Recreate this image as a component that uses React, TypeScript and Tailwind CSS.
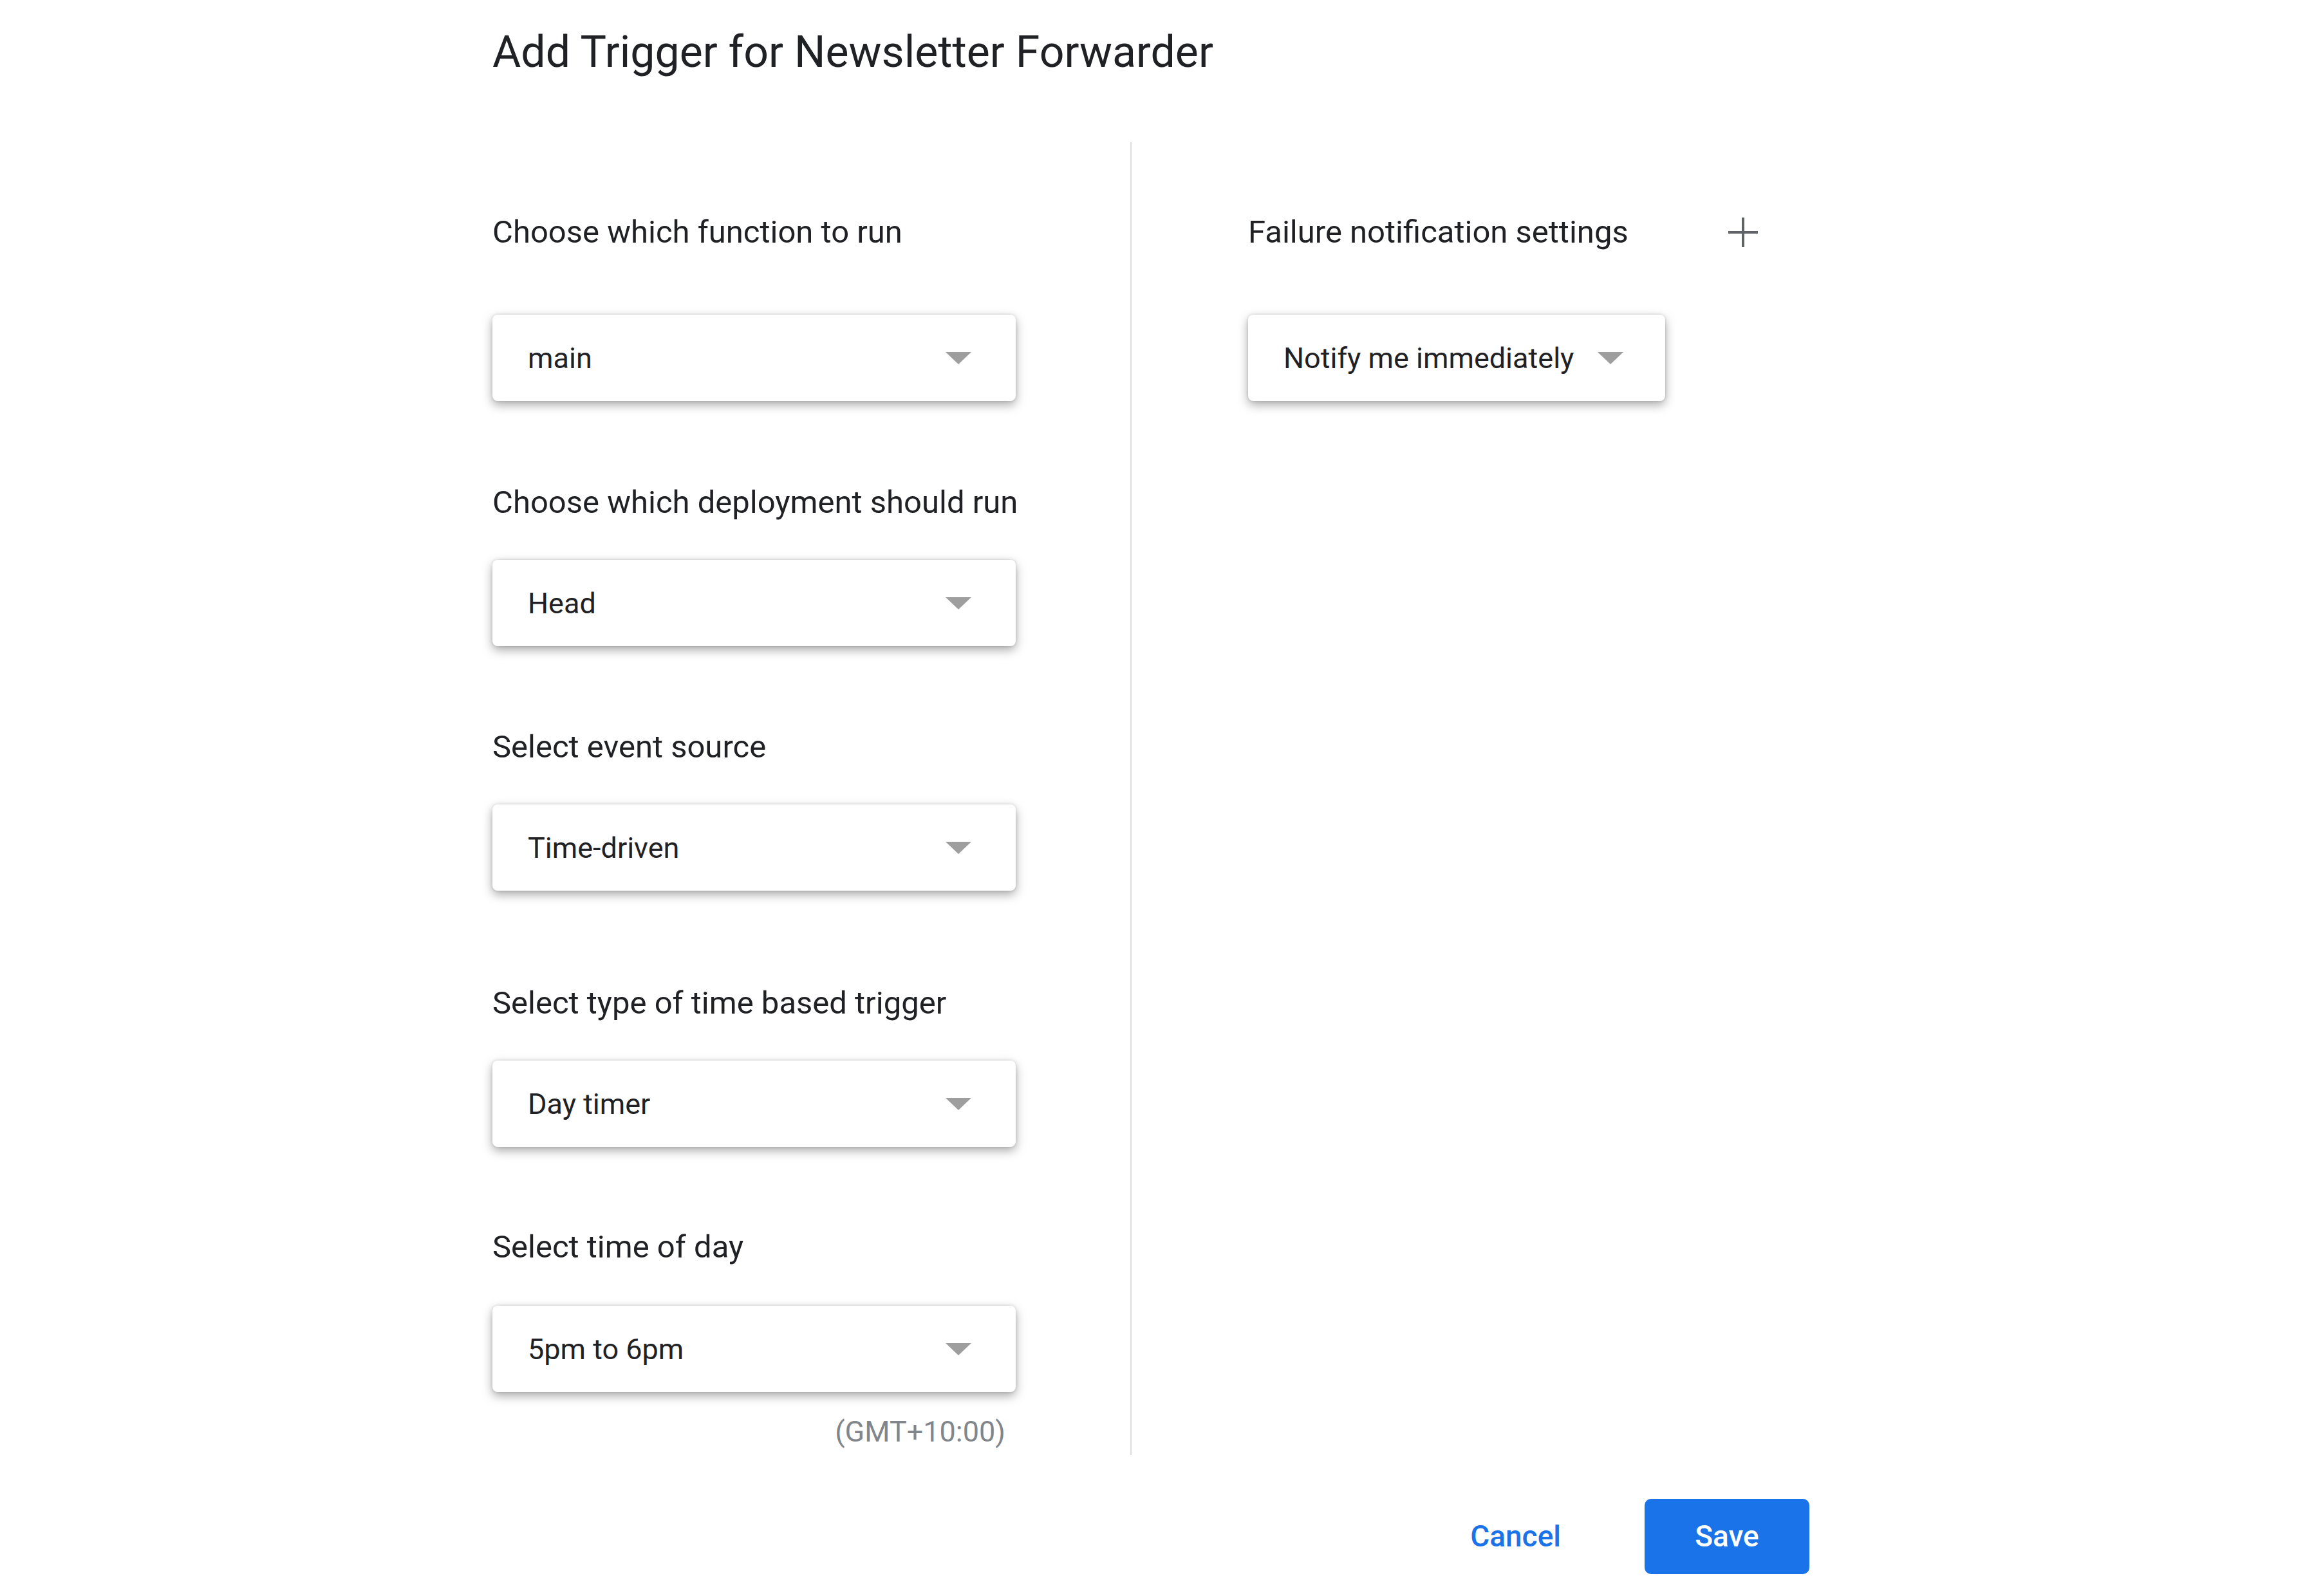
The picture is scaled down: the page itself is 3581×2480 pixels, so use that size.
import React from "react";

type Field = {
    label: string;
    value: string;
    top: string;
    gap: string;
};

const fields: Field[] = [
    { label: "Choose which function to run", value: "main", top: "mt-0", gap: "mt-[100px]" },
    { label: "Choose which deployment should run", value: "Head", top: "mt-[130px]", gap: "mt-[61px]" },
    { label: "Select event source", value: "Time-driven", top: "mt-[129px]", gap: "mt-[61px]" },
    { label: "Select type of time based trigger", value: "Day timer", top: "mt-[147px]", gap: "mt-[61px]" },
    { label: "Select time of day", value: "5pm to 6pm", top: "mt-[128px]", gap: "mt-[63px]" },
];

function Arrow() {
    return (
        <svg width="40" height="19" viewBox="0 0 40 19" className="shrink-0">
            <polygon points="0,0 40,0 20,19" fill="#9e9e9e" />
        </svg>
    );
}

function Select({ value, wide }: { value: string; wide?: boolean }) {
    return (
        <div
            className={
                "flex h-[134px] items-center rounded-[8px] bg-white pl-[55px] shadow-[0_6px_16px_rgba(0,0,0,0.34),0_0_5px_rgba(0,0,0,0.14)] " +
                (wide ? "w-[813px] justify-between pr-[69px]" : "w-fit gap-[37px] pr-[65px]")
            }
        >
            <span className="whitespace-nowrap text-[45px] leading-none text-[#202124]">{value}</span>
            <Arrow />
        </div>
    );
}

export default function App() {
    return (
        <div className="w-[3581px] h-[2480px] bg-white font-['Roboto',sans-serif] text-[#202124]">
            <div className="pl-[765px] pt-[42px]">
                <h1 className="whitespace-nowrap text-[68px] leading-[79px] font-normal text-[#202124]">
                    Add Trigger for Newsletter Forwarder
                </h1>
            </div>

            <div className="mt-[100px] flex pl-[765px]">
                {/* left column */}
                <div className="w-[813px] pt-[112px]">
                    {fields.map((f) => (
                        <div key={f.label} className={f.top}>
                            <div className="whitespace-nowrap text-[49px] leading-[56px]">{f.label}</div>
                            <div className={f.gap}>
                                <Select value={f.value} wide />
                            </div>
                        </div>
                    ))}
                    <div className="mt-[34px] pr-[16px] text-right text-[45px] leading-[56px] text-[#80868b]">
                        (GMT+10:00)
                    </div>
                </div>

                <div className="ml-[178px] h-[2040px] w-[2px] bg-[#dadce0]" />

                {/* right column */}
                <div className="ml-[181px] pt-[112px]">
                    <div className="flex items-center">
                        <div className="whitespace-nowrap text-[49px] leading-[56px]">Failure notification settings</div>
                        <svg width="50" height="50" viewBox="0 0 50 50" className="ml-[153px]">
                            <line x1="25" y1="2" x2="25" y2="48" stroke="#5f6368" strokeWidth="4" />
                            <line x1="2" y1="25" x2="48" y2="25" stroke="#5f6368" strokeWidth="4" />
                        </svg>
                    </div>
                    <div className="mt-[100px]">
                        <Select value="Notify me immediately" />
                    </div>
                </div>
            </div>

            <div className="mt-[68px] flex items-center justify-end pr-[770px]">
                <button className="px-[20px] text-[46px] font-medium text-[#1a73e8]">Cancel</button>
                <button className="ml-[110px] h-[117px] w-[256px] rounded-[10px] bg-[#1a73e8] text-[46px] font-medium text-white">
                    Save
                </button>
            </div>
        </div>
    );
}
